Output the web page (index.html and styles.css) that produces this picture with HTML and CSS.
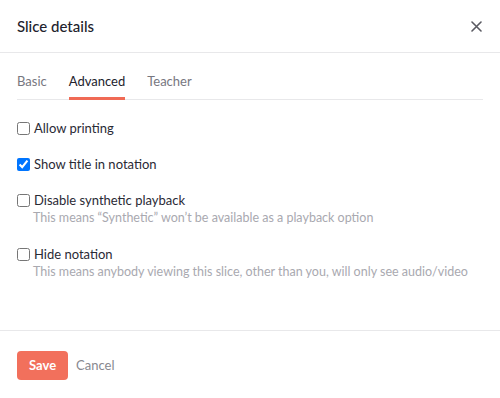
FILE: index.html
```html
<!DOCTYPE html>
<html lang="en">
<head>
  <meta charset="UTF-8" />
  <title>Slice details</title>
  <link rel="stylesheet" href="styles.css">
</head>
<body>
  <div class="modal">
    <div class="modal-header">
      <h2>Slice details</h2>
      <button class="close-btn" aria-label="Close">
        <svg width="11" height="11" viewBox="0 0 11 11"><path d="M1 1L10 10M10 1L1 10" stroke="#5a5a62" stroke-width="1.6" stroke-linecap="round"/></svg>
      </button>
    </div>

    <div class="modal-body">
      <div class="tabs">
        <div class="tab">Basic</div>
        <div class="tab active">Advanced</div>
        <div class="tab">Teacher</div>
      </div>

      <div class="option">
        <label><input type="checkbox" /> Allow printing</label>
      </div>
      <div class="option">
        <label><input type="checkbox" checked /> Show title in notation</label>
      </div>
      <div class="option">
        <label><input type="checkbox" /> Disable synthetic playback</label>
        <p class="hint">This means “Synthetic” won’t be available as a playback option</p>
      </div>
      <div class="option">
        <label><input type="checkbox" /> Hide notation</label>
        <p class="hint">This means anybody viewing this slice, other than you, will only see audio/video</p>
      </div>
    </div>

    <div class="modal-footer">
      <button class="save-btn">Save</button>
      <button class="cancel-btn">Cancel</button>
    </div>
  </div>
</body>
</html>
```

FILE: styles.css
```css
body {
  margin: 0;
  font-family: Lato, "Open Sans", sans-serif;
  background: white;
  color: #2a2a35;
}

.modal {
  width: 500px;
  height: 398px;
  display: flex;
  flex-direction: column;
}

.modal-header {
  height: 53px;
  border-bottom: 1px solid #e8e8ea;
  display: flex;
  align-items: center;
  justify-content: space-between;
  padding: 0 18px 0 17px;
  box-sizing: border-box;
}

h2 {
  margin: 0;
  font-size: 15px;
  font-weight: 500;
  color: #22222c;
}

.close-btn {
  background: none;
  border: none;
  padding: 0;
  width: 11px;
  height: 11px;
  cursor: pointer;
  display: flex;
}

.modal-body {
  flex: 1;
  padding: 0 17px;
  border-bottom: 1px solid #e8e8ea;
}

.tabs {
  display: flex;
  gap: 22px;
  border-bottom: 1px solid #e8e8ea;
  margin-top: 20px;
  margin-bottom: 19px;
}

.tab {
  font-size: 13px;
  color: #77777f;
  padding-bottom: 8px;
  border-bottom: 3px solid transparent;
  margin-bottom: -1px;
}

.tab.active {
  color: #22222c;
  border-bottom-color: #f06a55;
}

.option {
  margin-bottom: 18px;
}

.option label {
  display: flex;
  align-items: center;
  gap: 4px;
  font-size: 13px;
  color: #2a2a35;
  line-height: 18px;
}

.option input {
  margin: 0;
  width: 13px;
  height: 13px;
}

.hint {
  margin: 0 0 0 16px;
  font-size: 12.5px;
  color: #a9a9b0;
  line-height: 18px;
}

.modal-footer {
  height: 67px;
  display: flex;
  align-items: center;
  gap: 8px;
  padding: 1px 17px 0;
  box-sizing: border-box;
}

.save-btn {
  background: #f2705c;
  color: white;
  border: none;
  border-radius: 4px;
  font-family: inherit;
  font-weight: 700;
  font-size: 13px;
  height: 29px;
  padding: 0 12px;
  cursor: pointer;
}

.cancel-btn {
  background: none;
  border: none;
  font-family: inherit;
  font-size: 13px;
  color: #88888f;
  padding: 0;
  cursor: pointer;
}
```
